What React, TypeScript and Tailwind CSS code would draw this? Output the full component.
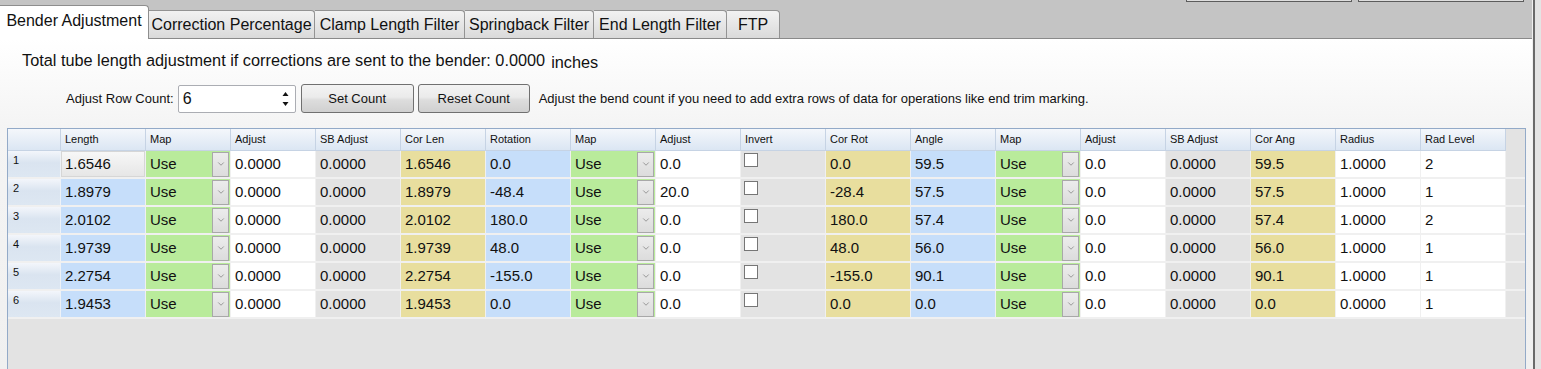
import { ChevronDown } from 'lucide-react';

type Kind = 'blue' | 'map' | 'white' | 'gray' | 'tan' | 'check';

const columns: { title: string; kind: Kind }[] = [
  { title: 'Length', kind: 'blue' },
  { title: 'Map', kind: 'map' },
  { title: 'Adjust', kind: 'white' },
  { title: 'SB Adjust', kind: 'gray' },
  { title: 'Cor Len', kind: 'tan' },
  { title: 'Rotation', kind: 'blue' },
  { title: 'Map', kind: 'map' },
  { title: 'Adjust', kind: 'white' },
  { title: 'Invert', kind: 'check' },
  { title: 'Cor Rot', kind: 'tan' },
  { title: 'Angle', kind: 'blue' },
  { title: 'Map', kind: 'map' },
  { title: 'Adjust', kind: 'white' },
  { title: 'SB Adjust', kind: 'gray' },
  { title: 'Cor Ang', kind: 'tan' },
  { title: 'Radius', kind: 'white' },
  { title: 'Rad Level', kind: 'white' },
];

const rows: string[][] = [
  ['1.6546', 'Use', '0.0000', '0.0000', '1.6546', '0.0', 'Use', '0.0', '', '0.0', '59.5', 'Use', '0.0', '0.0000', '59.5', '1.0000', '2'],
  ['1.8979', 'Use', '0.0000', '0.0000', '1.8979', '-48.4', 'Use', '20.0', '', '-28.4', '57.5', 'Use', '0.0', '0.0000', '57.5', '1.0000', '1'],
  ['2.0102', 'Use', '0.0000', '0.0000', '2.0102', '180.0', 'Use', '0.0', '', '180.0', '57.4', 'Use', '0.0', '0.0000', '57.4', '1.0000', '2'],
  ['1.9739', 'Use', '0.0000', '0.0000', '1.9739', '48.0', 'Use', '0.0', '', '48.0', '56.0', 'Use', '0.0', '0.0000', '56.0', '1.0000', '1'],
  ['2.2754', 'Use', '0.0000', '0.0000', '2.2754', '-155.0', 'Use', '0.0', '', '-155.0', '90.1', 'Use', '0.0', '0.0000', '90.1', '1.0000', '1'],
  ['1.9453', 'Use', '0.0000', '0.0000', '1.9453', '0.0', 'Use', '0.0', '', '0.0', '0.0', 'Use', '0.0', '0.0000', '0.0', '0.0000', '1'],
];

const bgFor: Record<Kind, string> = {
  blue: 'bg-[#c6defa]',
  map: 'bg-[#b9eb9b]',
  white: 'bg-white',
  gray: 'bg-[#e3e3e3]',
  tan: 'bg-[#e8de9e]',
  check: 'bg-[#e3e3e3]',
};

const tabs = [
  { label: 'Correction Percentage', w: 'w-[166px]' },
  { label: 'Clamp Length Filter', w: 'w-[150px]' },
  { label: 'Springback Filter', w: 'w-[129px]' },
  { label: 'End Length Filter', w: 'w-[133px]' },
  { label: 'FTP', w: 'w-[53px]' },
];

function Cell({ kind, value, selected }: { kind: Kind; value: string; selected?: boolean }) {
  if (selected) {
    return (
      <div className="flex h-[26px] w-[85px] items-center border-r border-[#f0f0f0] bg-white">
        <div className="flex h-full w-full items-center border border-[#d6d6d6] bg-[linear-gradient(to_bottom,#f7f7f7,#e6e6e6)] pl-[3px]">
          {value}
        </div>
      </div>
    );
  }
  return (
    <div className={`flex h-[26px] w-[85px] items-center border-r border-[#f0f0f0] ${bgFor[kind]}`}>
      {kind === 'check' ? (
        <div className="mb-auto ml-[3px] mt-[2px] h-[14px] w-[14px] border border-[#767676] bg-white" />
      ) : (
        <span className="pl-[4px]">{value}</span>
      )}
      {kind === 'map' && (
        <div className="ml-auto mr-px flex h-[25px] w-[17px] items-center justify-center border border-[#a8a8a8] bg-[linear-gradient(to_bottom,#ececec,#dcdcdc)]">
          <ChevronDown size={10} strokeWidth={1.5} className="text-[#6a6a6a]" />
        </div>
      )}
    </div>
  );
}

export default function App() {
  return (
    <div className="flex h-[369px] w-[1541px] overflow-hidden bg-[#e4e4e4] font-['Liberation_Sans',Arial,sans-serif] text-[#111]">
      <div className="flex w-[1532px] flex-col">
        <div className="flex h-[2px] justify-end gap-[6px] bg-[#c4c4c4] pr-[8px]">
          <div className="w-[166px] border-x border-b border-[#5c5c5c] bg-[#dedede]" />
          <div className="w-[166px] border-x border-b border-[#5c5c5c] bg-[#dedede]" />
        </div>

        <div className="flex h-[36px] items-end bg-[#c4c4c4]">
          <div className="relative z-10 -mb-px flex h-[34px] w-[149px] items-center justify-center rounded-tr-[4px] border-r border-t border-[#8e8e8e] bg-white pb-[3px] text-[16px]">
            Bender Adjustment
          </div>
          {tabs.map((t) => (
            <div
              key={t.label}
              className={`flex h-[28px] ${t.w} items-center justify-center rounded-tr-[4px] border-r border-t border-[#939393] bg-[linear-gradient(to_bottom,#f2f2f2,#dadada)] text-[16px]`}
            >
              {t.label}
            </div>
          ))}
        </div>

        <div className="flex flex-1 flex-col border-t border-[#8a8a8a] bg-[linear-gradient(to_bottom,#ffffff_0px,#f4f4f4_90px,#f0f0f0_100%)]">
          <div className="flex items-baseline pl-[22px] pt-[11px] text-[16.3px] leading-[20px]">
            <span>Total tube length adjustment if corrections are sent to the bender: 0.0000</span>
            <span className="ml-[6px] translate-y-[2px]">inches</span>
          </div>

          <div className="mt-[14px] flex h-[29px] items-center pl-[66px] text-[13px]">
            <span>Adjust Row Count:</span>
            <div className="ml-[4px] flex h-[28px] w-[118px] items-center rounded-[2px] border border-[#abadb3] bg-white pl-[4px] pr-[6px] text-[16px]">
              <span>6</span>
              <svg width="7" height="16" viewBox="0 0 7 16" className="ml-auto">
                <path d="M3.5 1 L6.5 5 L0.5 5 Z" fill="#111" />
                <path d="M3.5 15 L6.5 11 L0.5 11 Z" fill="#111" />
              </svg>
            </div>
            <button className="ml-[5px] h-[29px] w-[113px] rounded-[3px] border border-[#707070] bg-[linear-gradient(to_bottom,#f3f3f3,#ebebeb_45%,#dddddd_55%,#d0d0d0)]">
              Set Count
            </button>
            <button className="ml-[4px] h-[29px] w-[112px] rounded-[3px] border border-[#707070] bg-[linear-gradient(to_bottom,#f3f3f3,#ebebeb_45%,#dddddd_55%,#d0d0d0)]">
              Reset Count
            </button>
            <span className="ml-[9px]">
              Adjust the bend count if you need to add extra rows of data for operations like end trim marking.
            </span>
          </div>

          <div className="ml-[7px] mt-[15px] flex w-[1519px] flex-1 flex-col border-x border-t border-[#93aac8] bg-[#e3e3e3]">
            <div className="flex h-[22px] text-[11px]">
              <div className="w-[53px] border-b border-r border-[#c6d3e4] bg-[linear-gradient(to_bottom,#f4f7fb,#dbe6f3)]" />
              {columns.map((c, i) => (
                <div
                  key={i}
                  className="flex w-[85px] items-center border-b border-r border-[#c6d3e4] bg-[linear-gradient(to_bottom,#f4f7fb,#dbe6f3)] pl-[4px]"
                >
                  {c.title}
                </div>
              ))}
            </div>

            {rows.map((r, ri) => (
              <div key={ri} className="flex h-[28px] border-b-2 border-[#f0f0f0] text-[15px]">
                <div className="h-[26px] w-[53px] border-r border-[#eef2f7] bg-[linear-gradient(to_bottom,#f3f6fb,#dae4f0_45%,#dde7f2)] pl-[5px] pt-[2px] text-[11px] leading-[14px]">
                  {ri + 1}
                </div>
                {columns.map((c, ci) => (
                  <Cell key={ci} kind={c.kind} value={r[ci]} selected={ri === 0 && ci === 0} />
                ))}
              </div>
            ))}
          </div>
        </div>
      </div>
      <div className="w-[1px] bg-[#f0f0f0]" />
      <div className="w-[2px] bg-[#6a6a6a]" />
      <div className="flex-1 bg-[#e4e4e4]" />
    </div>
  );
}
